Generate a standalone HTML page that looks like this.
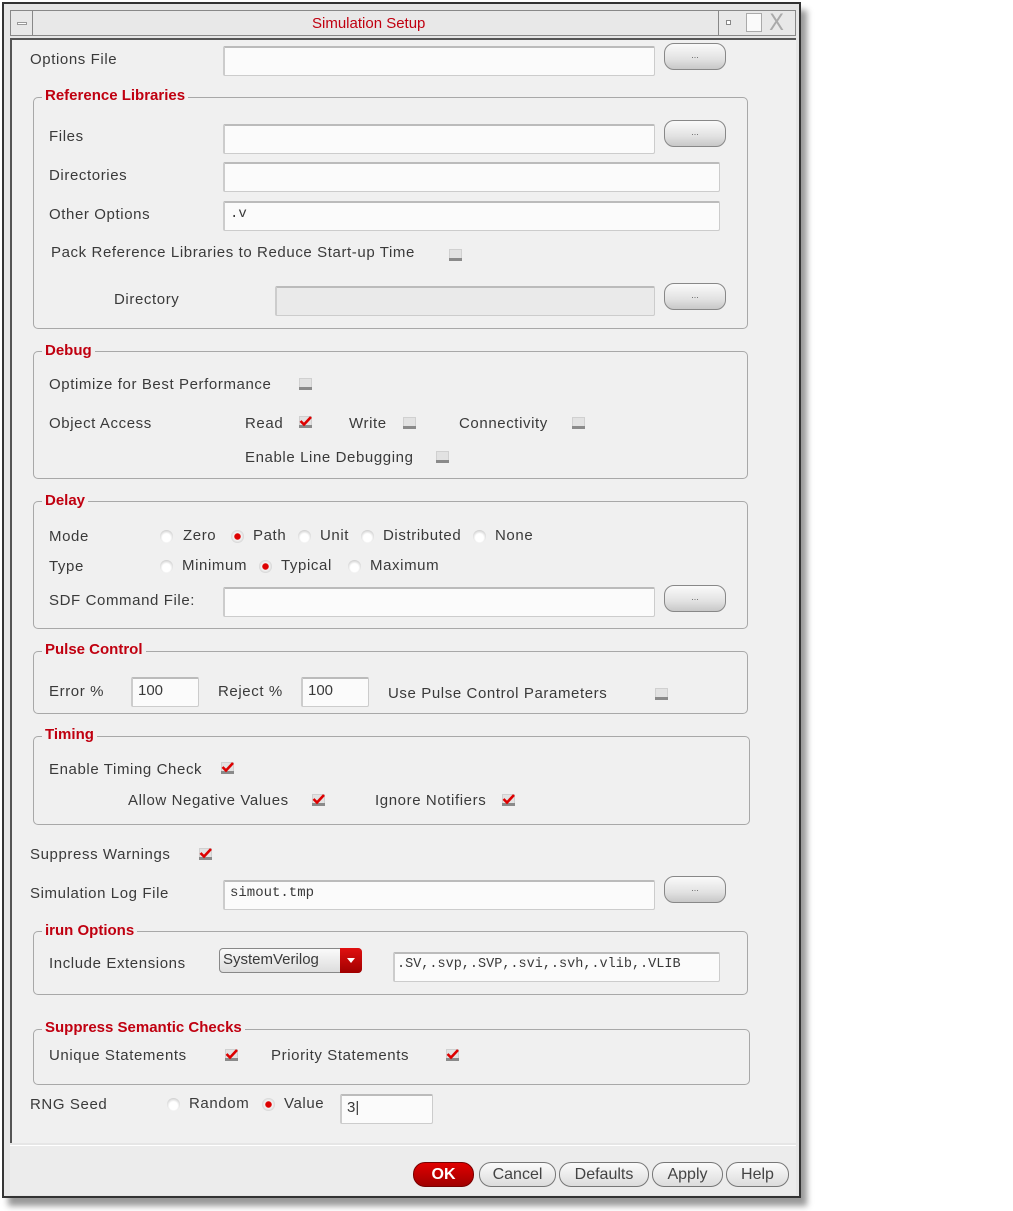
<!DOCTYPE html>
<html><head><meta charset="utf-8"><style>
*{box-sizing:border-box}
body{margin:0;width:1013px;height:1211px;background:#fff;position:relative;overflow:hidden;font-family:"Liberation Sans",sans-serif;font-size:15px;color:#3a3a3a}
div,span{position:absolute}
.win{left:2px;top:2px;width:799px;height:1196px;background:#e6e6e6;border:2px solid #333;box-shadow:6px 8px 6px #999}
.title{left:10px;top:10px;width:786px;height:26px;background:#e8e8e8;border:1px solid #888}
.content{left:10px;top:38px;width:786px;height:1105px;background:#f0f0f0;border-top:2px solid #555;border-left:2px solid #555}
.t{white-space:nowrap;letter-spacing:0.6px}
.in{background:#fbfbfb;border:1px solid #ccc;border-top:2px solid #bbb;border-left:2px solid #ccc;border-radius:2px;font-family:"Liberation Mono",monospace;font-size:14px;padding:3px 0 0 5px;letter-spacing:0}
.btn{width:62px;height:27px;border:1px solid #888;border-radius:10px;background:linear-gradient(#fafafa,#e2e2e2 60%,#c8c8c8);font-size:9px;text-align:center;line-height:22px;color:#666}
.g{border:1px solid #a8a8a8;border-radius:5px;left:33px;width:715px}
.lg{color:#c00010;font-weight:bold;background:#f0f0f0;padding:0 3px;font-size:15px;letter-spacing:0}
.cb{width:13px;height:12px}
.rd{width:13px;height:13px;border-radius:50%;background:radial-gradient(circle at 50% 60%,#fff 40%,#bbb 90%)}
.rd.on{background:radial-gradient(circle at 50% 50%,#d00 30%,#f6f6f6 40%,#bbb 95%)}
.fb{height:25px;border:1px solid #777;border-radius:12px;background:linear-gradient(#fbfbfb,#dcdcdc);text-align:center;line-height:23px;font-size:16px;color:#444;top:1162px}
</style></head><body>
<svg width="0" height="0" style="position:absolute"><defs>
<symbol id="cb" viewBox="0 0 13 12"><rect x="0.5" y="0.5" width="12" height="11" fill="#e2e2e2" stroke="#d0d0d0"/><rect x="0" y="9" width="13" height="3" fill="#8a8a8a"/></symbol>
<symbol id="ck" viewBox="0 0 13 12"><rect x="0.5" y="0.5" width="12" height="11" fill="#e2e2e2" stroke="#d0d0d0"/><rect x="0" y="9" width="13" height="3" fill="#8a8a8a"/><path d="M1.5 5 L5 8.5 L12 1" stroke="#d00" stroke-width="2.6" fill="none"/></symbol>
</defs></svg>
<div class="win"></div>
<div class="title"></div>
<div style="left:11px;top:11px;width:22px;height:24px;border-right:1px solid #888"><span style="left:6px;top:11px;width:10px;height:3px;border:1px solid #999;background:#fff"></span></div>
<div class="t" style="left:312px;top:15px;color:#c00010;font-size:15px;letter-spacing:0">Simulation Setup</div>
<div style="left:718px;top:11px;width:78px;height:24px;border-left:1px solid #888"></div>
<span style="left:726px;top:20px;width:5px;height:5px;border:1px solid #888;background:#fff"></span>
<span style="left:746px;top:13px;width:16px;height:19px;border:1px solid #aaa;background:#fafafa"></span>
<span style="left:769px;top:11px;font-size:22px;color:#aaa;font-family:'DejaVu Sans',sans-serif">X</span>
<div class="content"></div>

<div class="t" style="left:30px;top:51px">Options File</div>
<div class="in" style="left:223px;top:46px;width:432px;height:30px"></div>
<div class="btn" style="left:664px;top:43px">...</div>

<div class="g" style="top:97px;height:232px"></div>
<div class="lg" style="left:42px;top:87px">Reference Libraries</div>
<div class="t" style="left:49px;top:128px">Files</div>
<div class="in" style="left:223px;top:124px;width:432px;height:30px"></div>
<div class="btn" style="left:664px;top:120px">...</div>
<div class="t" style="left:49px;top:167px">Directories</div>
<div class="in" style="left:223px;top:162px;width:497px;height:30px"></div>
<div class="t" style="left:49px;top:206px">Other Options</div>
<div class="in" style="left:223px;top:201px;width:497px;height:30px">.v</div>
<div class="t" style="left:51px;top:244px">Pack Reference Libraries to Reduce Start-up Time</div>
<svg class="cb" style="position:absolute;left:449px;top:249px"><use href="#cb"/></svg>
<div class="t" style="left:114px;top:291px">Directory</div>
<div class="in" style="left:275px;top:286px;width:380px;height:30px;background:#eaeaea"></div>
<div class="btn" style="left:664px;top:283px">...</div>

<div class="g" style="top:351px;height:128px"></div>
<div class="lg" style="left:42px;top:342px">Debug</div>
<div class="t" style="left:49px;top:376px">Optimize for Best Performance</div>
<svg class="cb" style="position:absolute;left:299px;top:378px"><use href="#cb"/></svg>
<div class="t" style="left:49px;top:415px">Object Access</div>
<div class="t" style="left:245px;top:415px">Read</div>
<svg class="cb" style="position:absolute;left:299px;top:416px"><use href="#ck"/></svg>
<div class="t" style="left:349px;top:415px">Write</div>
<svg class="cb" style="position:absolute;left:403px;top:417px"><use href="#cb"/></svg>
<div class="t" style="left:459px;top:415px">Connectivity</div>
<svg class="cb" style="position:absolute;left:572px;top:417px"><use href="#cb"/></svg>
<div class="t" style="left:245px;top:449px">Enable Line Debugging</div>
<svg class="cb" style="position:absolute;left:436px;top:451px"><use href="#cb"/></svg>

<div class="g" style="top:501px;height:128px"></div>
<div class="lg" style="left:42px;top:492px">Delay</div>
<div class="t" style="left:49px;top:528px">Mode</div>
<div class="rd" style="left:160px;top:530px"></div><div class="t" style="left:183px;top:527px">Zero</div>
<div class="rd on" style="left:231px;top:530px"></div><div class="t" style="left:253px;top:527px">Path</div>
<div class="rd" style="left:298px;top:530px"></div><div class="t" style="left:320px;top:527px">Unit</div>
<div class="rd" style="left:361px;top:530px"></div><div class="t" style="left:383px;top:527px">Distributed</div>
<div class="rd" style="left:473px;top:530px"></div><div class="t" style="left:495px;top:527px">None</div>
<div class="t" style="left:49px;top:558px">Type</div>
<div class="rd" style="left:160px;top:560px"></div><div class="t" style="left:182px;top:557px">Minimum</div>
<div class="rd on" style="left:259px;top:560px"></div><div class="t" style="left:281px;top:557px">Typical</div>
<div class="rd" style="left:348px;top:560px"></div><div class="t" style="left:370px;top:557px">Maximum</div>
<div class="t" style="left:49px;top:592px">SDF Command File:</div>
<div class="in" style="left:223px;top:587px;width:432px;height:30px"></div>
<div class="btn" style="left:664px;top:585px">...</div>

<div class="g" style="top:651px;height:63px"></div>
<div class="lg" style="left:42px;top:641px">Pulse Control</div>
<div class="t" style="left:49px;top:683px">Error %</div>
<div class="in" style="left:131px;top:677px;width:68px;height:30px;font-family:'Liberation Sans';font-size:15px">100</div>
<div class="t" style="left:218px;top:683px">Reject %</div>
<div class="in" style="left:301px;top:677px;width:68px;height:30px;font-family:'Liberation Sans';font-size:15px">100</div>
<div class="t" style="left:388px;top:685px">Use Pulse Control Parameters</div>
<svg class="cb" style="position:absolute;left:655px;top:688px"><use href="#cb"/></svg>

<div class="g" style="top:736px;height:89px;width:717px"></div>
<div class="lg" style="left:42px;top:726px">Timing</div>
<div class="t" style="left:49px;top:761px">Enable Timing Check</div>
<svg class="cb" style="position:absolute;left:221px;top:762px"><use href="#ck"/></svg>
<div class="t" style="left:128px;top:792px">Allow Negative Values</div>
<svg class="cb" style="position:absolute;left:312px;top:794px"><use href="#ck"/></svg>
<div class="t" style="left:375px;top:792px">Ignore Notifiers</div>
<svg class="cb" style="position:absolute;left:502px;top:794px"><use href="#ck"/></svg>

<div class="t" style="left:30px;top:846px">Suppress Warnings</div>
<svg class="cb" style="position:absolute;left:199px;top:848px"><use href="#ck"/></svg>
<div class="t" style="left:30px;top:885px">Simulation Log File</div>
<div class="in" style="left:223px;top:880px;width:432px;height:30px">simout.tmp</div>
<div class="btn" style="left:664px;top:876px">...</div>

<div class="g" style="top:931px;height:64px"></div>
<div class="lg" style="left:42px;top:922px">irun Options</div>
<div class="t" style="left:49px;top:955px">Include Extensions</div>
<div style="left:219px;top:948px;width:143px;height:25px;border:1px solid #888;border-radius:4px;background:linear-gradient(#fafafa,#ddd);font-size:15px;padding:2px 0 0 3px;letter-spacing:0">SystemVerilog</div>
<div style="left:340px;top:948px;width:22px;height:25px;background:linear-gradient(#e01010,#a00000);border-radius:0 4px 4px 0"><span style="left:7px;top:10px;width:0;height:0;border-left:4px solid transparent;border-right:4px solid transparent;border-top:5px solid #fff"></span></div>
<div class="in" style="left:393px;top:952px;width:327px;height:30px;font-size:13.5px;padding-left:2px">.SV,.svp,.SVP,.svi,.svh,.vlib,.VLIB</div>

<div class="g" style="top:1029px;height:56px;width:717px"></div>
<div class="lg" style="left:42px;top:1019px">Suppress Semantic Checks</div>
<div class="t" style="left:49px;top:1047px">Unique Statements</div>
<svg class="cb" style="position:absolute;left:225px;top:1049px"><use href="#ck"/></svg>
<div class="t" style="left:271px;top:1047px">Priority Statements</div>
<svg class="cb" style="position:absolute;left:446px;top:1049px"><use href="#ck"/></svg>

<div class="t" style="left:30px;top:1096px">RNG Seed</div>
<div class="rd" style="left:167px;top:1098px"></div><div class="t" style="left:189px;top:1095px">Random</div>
<div class="rd on" style="left:262px;top:1098px"></div><div class="t" style="left:284px;top:1095px">Value</div>
<div class="in" style="left:340px;top:1094px;width:93px;height:30px;font-family:'Liberation Sans';font-size:15px">3|</div>

<div style="left:10px;top:1145px;width:786px;height:50px;background:#ececec;border-top:1px solid #fff"></div>
<div class="fb" style="left:413px;width:61px;background:linear-gradient(#e00000,#a00000);color:#fff;font-weight:bold;border-color:#700">OK</div>
<div class="fb" style="left:479px;width:77px">Cancel</div>
<div class="fb" style="left:559px;width:90px">Defaults</div>
<div class="fb" style="left:652px;width:71px">Apply</div>
<div class="fb" style="left:726px;width:63px">Help</div>
</body></html>
